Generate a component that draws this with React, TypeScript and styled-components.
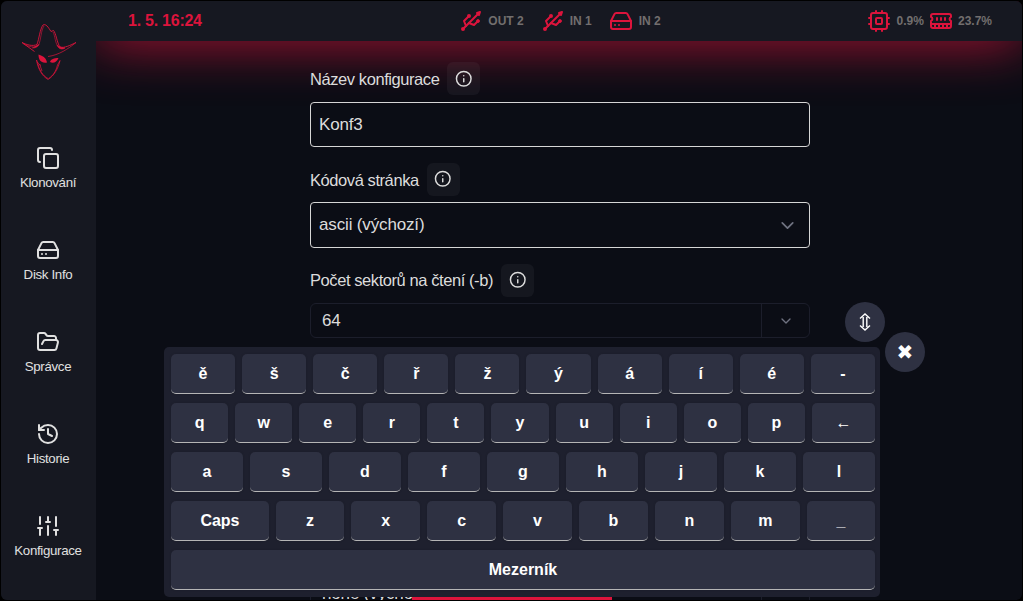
import React from "react";
import styled, { createGlobalStyle } from "styled-components";
import { ChevronDown, Copy, FolderOpen, HardDrive, History, Info, Usb } from "lucide-react";

const RED = "#dc143c";

const GlobalStyle = createGlobalStyle`
  * { box-sizing: border-box; }
  body {
    margin: 0;
    background: #000;
    font-family: "Liberation Sans", Arial, sans-serif;
    overflow: hidden;
  }
`;

const Frame = styled.div`
  position: relative;
  display: flex;
  width: 1023px;
  height: 601px;
  padding: 1px;
  background: #000;
`;

const Shell = styled.div`
  display: grid;
  grid-template-columns: 95px 1fr;
  grid-template-rows: 40px 1fr;
  width: 100%;
  border-radius: 6px;
  overflow: hidden;
  background: #0b0d15;
  color: #dcdcdc;
`;

const Sidebar = styled.nav`
  position: relative;
  z-index: 2;
  grid-row: 1 / 3;
  display: flex;
  flex-direction: column;
  align-items: center;
  background: #161821;
  padding-top: 22px;
`;

const NavList = styled.div`
  display: flex;
  flex-direction: column;
  gap: 47px;
  margin: 65px 1px 0 0;
`;

const NavItem = styled.a`
  display: flex;
  flex-direction: column;
  align-items: center;
  height: 45px;
  font-size: 13.3px;
  letter-spacing: -0.33px;
  line-height: 16px;
  gap: 5px;
  white-space: nowrap;
  color: #e0e0e0;
  svg { flex-shrink: 0; }
`;

const Header = styled.header`
  position: relative;
  z-index: 1;
  display: grid;
  grid-template-columns: 1fr auto 1fr;
  align-items: center;
  padding: 0 30px 0 32px;
  background: #161821;
  box-shadow: 0 0 54px rgba(220, 20, 60, 0.9);
`;

const Clock = styled.span`
  color: ${RED};
  font-size: 16px;
  font-weight: bold;
  letter-spacing: -0.25px;
  line-height: 18px;
`;

const Group = styled.div<{ $gap: number; $end?: boolean }>`
  display: flex;
  gap: ${(p) => p.$gap}px;
  justify-content: ${(p) => (p.$end ? "flex-end" : "center")};
`;

const Status = styled.div<{ $gap: number }>`
  display: flex;
  align-items: center;
  gap: ${(p) => p.$gap}px;
  color: #726e6e;
  font-size: 12px;
  font-weight: bold;
  svg { color: ${RED}; }
`;

const Main = styled.main`
  display: flex;
  flex-direction: column;
  align-items: flex-start;
  width: 500px;
  height: 560px;
  margin-left: 214px;
  padding-top: 21px;
  overflow: hidden;
  font-size: 17px;
  letter-spacing: -0.15px;
`;

const Field = styled.section<{ $after: number }>`
  width: 100%;
  margin-bottom: ${(p) => p.$after}px;
`;

const Caption = styled.div<{ $gap: number }>`
  display: flex;
  align-items: center;
  height: 33px;
  gap: 8px;
  margin-bottom: ${(p) => p.$gap}px;
  position: relative;
  z-index: 2;
`;

const CaptionText = styled.span<{ $drop: number }>`
  padding-top: ${(p) => p.$drop}px;
  font-size: 16.5px;
  letter-spacing: -0.425px;
`;

const InfoButton = styled.button<{ $lift: number }>`
  display: grid;
  place-items: center;
  width: 33px;
  height: 33px;
  padding: 0 0 ${(p) => p.$lift}px;
  border: 0;
  border-radius: 6px;
  background: rgba(255, 255, 255, 0.045);
  color: #dcdcdc;
`;

const Control = styled.div<{ $height: number }>`
  display: flex;
  align-items: center;
  justify-content: space-between;
  height: ${(p) => p.$height}px;
  padding: 0 11px 0 8px;
  border: 1px solid #d6d6d6;
  border-radius: 4px;
  svg { color: #6f7280; }
`;

const Combo = styled.div`
  display: grid;
  grid-template-columns: 1fr 48px;
  height: 35px;
  border: 1px solid #1c1e2b;
  border-radius: 6px;
`;

const ComboValue = styled.span`
  padding-left: 11px;
  line-height: 33px;
`;

const ComboToggle = styled.span`
  display: grid;
  place-items: center;
  border-left: 1px solid #1c1e2b;
  color: #6f7280;
`;

const SaveBar = styled.div`
  position: absolute;
  left: 412px;
  top: 560px;
  width: 200px;
  height: 40px;
  background: ${RED};
`;

const Keyboard = styled.div`
  position: absolute;
  z-index: 3;
  left: 164px;
  top: 347px;
  width: 716px;
  height: 250px;
  display: flex;
  flex-direction: column;
  gap: 9px;
  padding: 7px 5px 7px 7px;
  border-radius: 5px;
  background: #1e202e;
`;

const KeyRow = styled.div`
  display: flex;
  gap: 7px;
`;

const Key = styled.button<{ $grow: number }>`
  flex: ${(p) => p.$grow} 1 0;
  min-width: 0;
  height: 40px;
  padding: 1px 0 0;
  border: 0;
  border-bottom: 1px solid #b5b5b5;
  border-radius: 5px;
  background: #2e3142;
  box-shadow: 0 0 3px -1px rgba(0, 0, 0, 0.3);
  color: #fff;
  font: bold 16px "Liberation Sans", Arial, sans-serif;
`;

const RoundButton = styled.button<{ $x: number; $y: number }>`
  position: absolute;
  z-index: 4;
  left: ${(p) => p.$x}px;
  top: ${(p) => p.$y}px;
  display: grid;
  place-items: center;
  width: 40px;
  height: 40px;
  padding: 0 0 1px;
  border: 0;
  border-radius: 50%;
  background: #2e3142;
  color: #fff;
  font: bold 20px/1 "DejaVu Sans", sans-serif;
`;

const stroke = {
  width: 24,
  height: 24,
  viewBox: "0 0 24 24",
  fill: "none",
  stroke: "currentColor",
  strokeWidth: 2,
  strokeLinecap: "round" as const,
  strokeLinejoin: "round" as const,
};

const Sliders = () => (
  <svg {...stroke}>
    <path d="M4 21v-7M4 10V3M12 21v-9M12 8V3M20 21v-5M20 12V3M2 14h4M10 8h4M18 16h4" />
  </svg>
);

const Processor = () => (
  <svg {...stroke}>
    <rect x="4" y="4" width="16" height="16" rx="2" />
    <rect x="9" y="9" width="6" height="6" rx="1" />
    <path d="M15 2v2M15 20v2M2 15h2M2 9h2M20 15h2M20 9h2M9 2v2M9 20v2" />
  </svg>
);

const Memory = () => (
  <svg {...stroke}>
    <path d="M6 19v-3M10 19v-3M14 19v-3M18 19v-3M8 11V9M16 11V9M12 11V9M2 15h20" />
    <path d="M2 7a2 2 0 0 1 2-2h16a2 2 0 0 1 2 2v1.1a2 2 0 0 0 0 3.837V17a2 2 0 0 1-2 2H4a2 2 0 0 1-2-2v-5.1a2 2 0 0 0 0-3.837Z" />
  </svg>
);

const MoveArrow = () => (
  <svg width="12" height="18" viewBox="0 0 12 18" fill="none" stroke="currentColor" strokeWidth="1.4">
    <path d="M1 5.500 6 1 11 5.500M1 12.500 6 17 11 12.500M4.200 4V14M7.800 4V14" />
  </svg>
);

const Logo = () => (
  <svg width="56" height="58" viewBox="0 0 56 58" fill="none" stroke={RED} strokeWidth=".9">
    <path d="M13.500 28.500 1 19.500C6 22 12 23.500 16 21.500C18 16 19 6 22 2C25 .500 27 4 30 8.500L32.500 7.500C35 10 36 20 39 24C43 25.500 50 22 55 19.500" />
    <path d="M55 19.500C47 26 38 32 27 33.500" strokeWidth=".7" />
    <path d="M2 20.500C7 24 14 25 17.500 22.500C20 17 20 7 23 3M32 9C34 12 34 21 38 25C40 26 42 26 44 24.500" strokeWidth=".6" />
    <path d="M11 25C14 25.500 17 24 18 21M36 22C38 26 41 27 44 25L39 24Z" fill={RED} strokeWidth=".5" />
    <path d="M17.500 31.500C23 33 25.500 36 26 39.500C20 40.500 17.500 37 17.500 31.500ZM29 39C30 36 33 35 37.500 35C36 39 32 41 29 39Z" fill={RED} stroke="none" />
    <path d="M15.500 37C17 46 21 53 27 56.500C33 53 37.500 45 39 37.500M15.500 37C17 41 18 41 20 42.500M16.500 39C18 47 22 53 27 55.500M39 37.500L36.500 42C35 48 32 53 27.500 55.500M18.500 41L21 48" strokeWidth=".75" />
  </svg>
);

const navigation = [
  { label: "Klonování", icon: <Copy /> },
  { label: "Disk Info", icon: <HardDrive /> },
  { label: "Správce", icon: <FolderOpen /> },
  { label: "Historie", icon: <History /> },
  { label: "Konfigurace", icon: <Sliders /> },
];

const keyRows = [
  ["ě", "š", "č", "ř", "ž", "ý", "á", "í", "é", "-"],
  ["q", "w", "e", "r", "t", "y", "u", "i", "o", "p", "←"],
  ["a", "s", "d", "f", "g", "h", "j", "k", "l"],
  ["Caps", "z", "x", "c", "v", "b", "n", "m", "_"],
  ["Mezerník"],
];

const keyGrow: Record<string, number> = { Caps: 1.42, "←": 1.105, z: 0.99, _: 0.988 };

type LabelProps = { text: string; gap: number; drop?: number; lift?: number };

function Label({ text, gap, drop = 0, lift = 1 }: LabelProps) {
  return (
    <Caption $gap={gap}>
      <CaptionText $drop={drop}>{text}</CaptionText>
      <InfoButton $lift={lift} aria-label="Info"><Info size={17.5} /></InfoButton>
    </Caption>
  );
}

export default function App() {
  return (
    <Frame>
      <GlobalStyle />
      <Shell>
        <Sidebar>
          <Logo />
          <NavList>
            {navigation.map((item) => (
              <NavItem key={item.label}>{item.icon}<span>{item.label}</span></NavItem>
            ))}
          </NavList>
        </Sidebar>
        <Header>
          <Clock>1. 5. 16:24</Clock>
          <Group $gap={17}>
            <Status $gap={5}><Usb />OUT 2</Status>
            <Status $gap={5}><Usb />IN 1</Status>
            <Status $gap={6}><HardDrive />IN 2</Status>
          </Group>
          <Group $gap={5} $end>
            <Status $gap={6}><Processor />0.9%</Status>
            <Status $gap={5}><Memory />23.7%</Status>
          </Group>
        </Header>
        <Main>
          <Field $after={16}>
            <Label text="Název konfigurace" gap={7} drop={2} lift={0} />
            <Control $height={45}>Konf3</Control>
          </Field>
          <Field $after={16}>
            <Label text="Kódová stránka" gap={6} drop={2} />
            <Control $height={46}>ascii (výchozí)<ChevronDown size={21} /></Control>
          </Field>
          <Field $after={238}>
            <Label text="Počet sektorů na čtení (-b)" gap={6} />
            <Combo>
              <ComboValue>64</ComboValue>
              <ComboToggle><ChevronDown size={16} /></ComboToggle>
            </Combo>
          </Field>
          <Field $after={0}>
            <Combo>
              <ComboValue>none (výchozí)</ComboValue>
              <ComboToggle><ChevronDown size={16} /></ComboToggle>
            </Combo>
          </Field>
        </Main>
      </Shell>
      <SaveBar />
      <Keyboard>
        {keyRows.map((row) => (
          <KeyRow key={row[0]}>
            {row.map((key) => <Key key={key} $grow={keyGrow[key] ?? 1}>{key}</Key>)}
          </KeyRow>
        ))}
      </Keyboard>
      <RoundButton $x={845} $y={302} aria-label="Move"><MoveArrow /></RoundButton>
      <RoundButton $x={885} $y={332}>✖</RoundButton>
    </Frame>
  );
}
